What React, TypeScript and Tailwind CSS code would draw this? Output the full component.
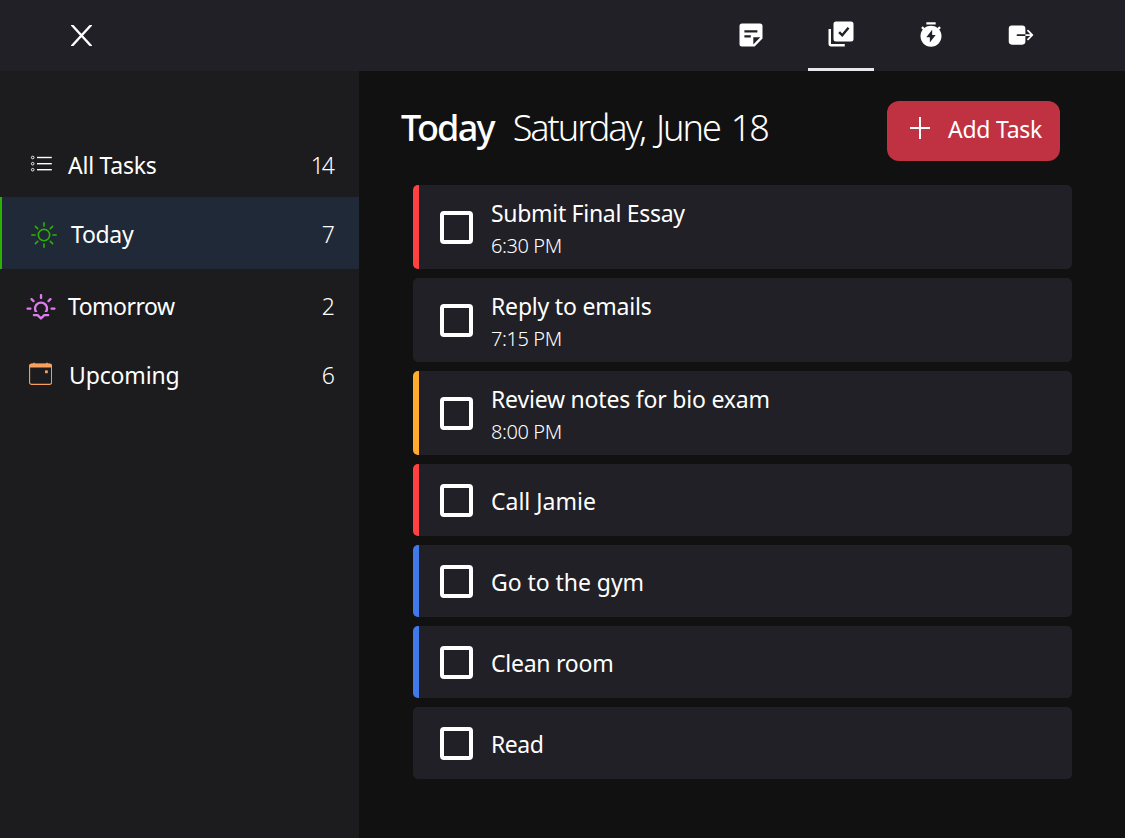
import type { ReactNode } from "react";
import { BiSolidSelectMultiple } from "react-icons/bi";
import { RiTimerFlashFill } from "react-icons/ri";
import { IoExit } from "react-icons/io5";
import { BsSun } from "react-icons/bs";
import { WiSunset } from "react-icons/wi";

function NoteIcon() {
  return (
    <svg viewBox="0 0 24 24" className="size-6" fill="currentColor">
      <path
        fillRule="evenodd"
        d="M3 .5h18A2.5 2.5 0 0 1 23.5 3v12.6l-7.9 7.9H3A2.5 2.5 0 0 1 .5 21V3A2.5 2.5 0 0 1 3 .5ZM5.4 7.2v2.2h13V7.2ZM5.4 12.2v2.2h6.4v-2.2ZM14.3 14.3v7.1l7-7.1Z"
      />
    </svg>
  );
}

function ListIcon() {
  return (
    <svg viewBox="0 0 24 24" className="mb-1 size-6" fill="none" stroke="currentColor">
      {[5.5, 11.7, 17.7].map((y) => (
        <g key={y}>
          <circle cx="3.7" cy={y} r="1.3" strokeWidth="0.9" />
          <path d={`M8 ${y}H22.8`} strokeWidth="1.4" />
        </g>
      ))}
    </svg>
  );
}

function CalendarIcon() {
  return (
    <svg viewBox="0 0 24 24" className="mb-0.5 size-6 text-[#f9a05f]" fill="none" stroke="currentColor">
      <rect x="1.6" y="2.2" width="22" height="20.2" rx="2" strokeWidth="1.1" />
      <path d="M1.1 5.5V4a2.6 2.6 0 0 1 2.6-2.4h1.4V.8h1.6v.8h11.4V.8h1.6v.8h1.4A2.6 2.6 0 0 1 24 4v1.5Z" fill="currentColor" stroke="none" />
      <rect x="17" y="8.4" width="2.8" height="2.8" fill="currentColor" stroke="none" />
    </svg>
  );
}

type NavItem = { label: string; count: number; icon: ReactNode; row: string; text: string };

const navItems: NavItem[] = [
  { label: "All Tasks", count: 14, icon: <ListIcon />, row: "h-[63px] pl-[29px]", text: "ml-[15px] tracking-[-0.25px]" },
  { label: "Today", count: 7, icon: <BsSun className="size-[26px] text-[#2db100]" />, row: "h-[72px] border-l-2 border-[#2db100] bg-[#202938] pt-[3px] pl-[29px]", text: "ml-3.5 tracking-[-0.3px]" },
  { label: "Tomorrow", count: 2, icon: <WiSunset className="mt-0.5 size-9 text-[#e07af0]" />, row: "h-[75px] pl-[23px]", text: "ml-[9px] tracking-[-0.5px]" },
  { label: "Upcoming", count: 6, icon: <CalendarIcon />, row: "h-[62px] pl-7", text: "ml-[17px] tracking-[-0.15px]" },
];

type Task = { title: string; time?: string; bar: string; tracking: string };

const tasks: Task[] = [
  { title: "Submit Final Essay", time: "6:30 PM", bar: "bg-[#ff4141]", tracking: "tracking-[-0.3px]" },
  { title: "Reply to emails", time: "7:15 PM", bar: "bg-transparent", tracking: "tracking-[-0.2px]" },
  { title: "Review notes for bio exam", time: "8:00 PM", bar: "bg-[#ffab2e]", tracking: "tracking-[-0.2px]" },
  { title: "Call Jamie", bar: "bg-[#ff4141]", tracking: "tracking-normal" },
  { title: "Go to the gym", bar: "bg-[#4179e8]", tracking: "tracking-[-0.05px]" },
  { title: "Clean room", bar: "bg-[#4179e8]", tracking: "tracking-[-0.25px]" },
  { title: "Read", bar: "bg-transparent", tracking: "tracking-[-0.5px]" },
];

function TaskCard({ task }: { task: Task }) {
  return (
    <li className={`flex w-[659px] overflow-hidden rounded-[5px] bg-[#212026] ${task.time ? "h-[84px]" : "h-[72px]"}`}>
      <span className={`w-1.5 shrink-0 ${task.bar}`} />
      <div className="flex items-center pl-[21px]">
        <span className="size-[33px] shrink-0 rounded-[4px] border-4 border-white" />
        <div className={`pl-[18px] ${task.time ? "pt-1.5" : "pt-px"}`}>
          <div className={`text-[23px] leading-8 whitespace-nowrap ${task.tracking}`}>{task.title}</div>
          {task.time && <div className="text-[20px] leading-[34px] font-light tracking-[-0.4px]">{task.time}</div>}
        </div>
      </div>
    </li>
  );
}

export default function App() {
  return (
    <div className="flex h-[838px] w-[1125px] flex-col overflow-hidden bg-[#111111] font-['Noto_Sans',sans-serif] text-white">
      <header className="flex h-[71px] shrink-0 items-center justify-between bg-[#212026] pr-[71px] pl-[71px]">
        <svg viewBox="0 0 21 21" className="size-[21px]" fill="none" stroke="currentColor" strokeWidth="2.3">
          <path d="M0 -1 21 22M21 -1 0 22" />
        </svg>
        <nav className="flex h-full gap-6">
          <div className="flex h-full w-[66px] items-center justify-center pb-px"><NoteIcon /></div>
          <div className="flex h-full w-[66px] items-center justify-center border-b-[3px] border-[#e8e8ea]"><BiSolidSelectMultiple className="size-[30px]" /></div>
          <div className="flex h-full w-[66px] items-center justify-center pb-0.5"><RiTimerFlashFill className="size-[28px]" /></div>
          <div className="flex h-full w-[66px] items-center justify-center pb-0.5"><IoExit className="size-[28px]" /></div>
        </nav>
      </header>
      <div className="flex flex-1">
        <aside className="w-[359px] shrink-0 bg-[#1c1c1e] pt-[63px]">
          {navItems.map((n) => (
            <div key={n.label} className={`flex items-center pr-6 ${n.row}`}>
              {n.icon}
              <span className={`text-[23px] ${n.text}`}>{n.label}</span>
              <span className={`ml-auto text-[23px] font-light ${n.count > 9 ? "mr-0.5 -indent-px tracking-[-2px]" : "tracking-normal"}`}>{n.count}</span>
            </div>
          ))}
        </aside>
        <main className="flex-1 pt-[30px] pl-[42px]">
          <div className="flex h-[60px] w-[659px] justify-between">
            <h1 className="flex text-[36px] leading-[54px] whitespace-nowrap">
              <span className="font-medium tracking-[-1.8px]">Today</span>
              <span className="ml-[19px] font-light tracking-[-2px] [word-spacing:3.5px]">Saturday, June 18</span>
            </h1>
            <button className="flex h-[60px] w-[173px] items-center rounded-xl bg-[#c03241] pl-[22px]">
              <svg viewBox="0 0 22 22" className="mb-1.5 size-[22px]" fill="none" stroke="currentColor" strokeWidth="2">
                <path d="M11 0v22M1 11h20" />
              </svg>
              <span className="mb-[3px] ml-[17px] text-[23px] tracking-[-0.25px] whitespace-nowrap">Add Task</span>
            </button>
          </div>
          <ul className="mt-6 ml-3 flex flex-col gap-[9px]">
            {tasks.map((t) => <TaskCard key={t.title} task={t} />)}
          </ul>
        </main>
      </div>
    </div>
  );
}
